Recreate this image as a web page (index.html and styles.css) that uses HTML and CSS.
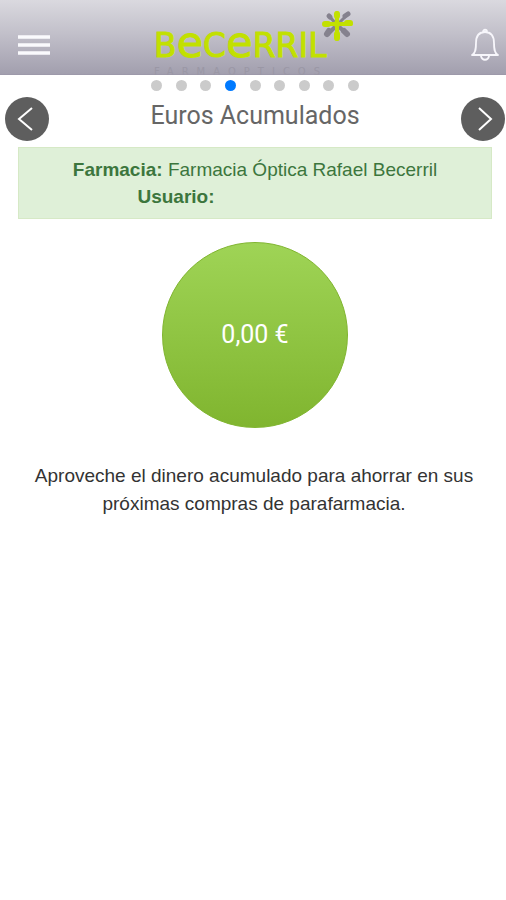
FILE: index.html
```html
<!DOCTYPE html>
<html lang="es">
<head>
<meta charset="utf-8">
<meta name="viewport" content="width=device-width, initial-scale=1">
<title>Euros Acumulados</title>
<link rel="stylesheet" href="styles.css">
</head>
<body>
<header class="topbar">
  <button class="icon-button" type="button" aria-label="Menú">
    <svg width="34" height="22" viewBox="0 0 34 22"><path d="M1 3h32M1 11h32M1 19h32" stroke="#fafafd" stroke-width="3.6"/></svg>
  </button>
  <div class="brand">
    <div class="wordmark">B<span class="round">e</span>C<span class="round">e</span>RRIL</div>
    <div class="tagline">FARMAOPTICOS</div>
    <svg class="flower" width="32" height="32" viewBox="0 0 32 32">
      <g stroke="#85828e" stroke-linecap="round">
        <path d="M15 15L8 7M15 15l8-8" stroke-width="3"/>
        <path d="M8 7l-1-1M23 6l3-2" stroke-width="5"/>
        <path d="M15 15l-9 9M15 15l10 9" stroke-width="4"/>
        <path d="M7 21l-2 3M22 21l3 3" stroke-width="6"/>
      </g>
      <g stroke="#c2e000" stroke-linecap="round">
        <path d="M15 3v26M3 14h26" stroke-width="4"/>
        <path d="M15 4v2M15 24v4M3 14h3M25 13h3" stroke-width="6"/>
        <circle cx="15" cy="14" r="3" fill="#c2e000"/>
      </g>
    </svg>
  </div>
  <button class="icon-button" type="button" aria-label="Notificaciones">
    <svg width="28" height="34" viewBox="0 0 28 34" fill="none" stroke="#f7f6fb" stroke-width="1.8" stroke-linecap="round" stroke-linejoin="round"><path d="M12 4c0-3 4-3 4 0M1 27c4-2 4-7 4-12 0-7 3-11 9-11s9 4 9 11c0 5 0 10 4 12ZM10 28c1 5 7 5 8 0"/></svg>
  </button>
</header>
<main class="page">
  <nav class="pager" aria-label="Páginas">
    <span class="dot"></span><span class="dot"></span><span class="dot"></span><span class="dot active"></span><span class="dot"></span><span class="dot"></span><span class="dot"></span><span class="dot"></span><span class="dot"></span>
  </nav>
  <div class="title-row">
    <button class="arrow" type="button" aria-label="Anterior"><svg width="44" height="44" viewBox="0 0 44 44"><path d="M27 11L14 22l13 11"/></svg></button>
    <h1 class="title">Euros Acumulados</h1>
    <button class="arrow" type="button" aria-label="Siguiente"><svg width="44" height="44" viewBox="0 0 44 44"><path d="M18 11l12 11-12 11"/></svg></button>
  </div>
  <section class="info">
    <div><strong>Farmacia:</strong> Farmacia Óptica Rafael Becerril</div>
    <div><strong>Usuario:</strong><span class="user-name"></span></div>
  </section>
  <div class="amount">0,00 €</div>
  <p class="note">Aproveche el dinero acumulado para ahorrar en sus próximas compras de parafarmacia.</p>
</main>
</body>
</html>
```
FILE: styles.css
```css
* { box-sizing: border-box; }
body {
  margin: 0;
  background: #fff;
  color: #333;
  font: 19px/28px "Liberation Sans", Arial, sans-serif;
}
button {
  padding: 0;
  border: 0;
  background: none;
}
svg { display: block; }
.topbar {
  display: flex;
  justify-content: space-between;
  height: 75px;
  padding: 0 7px 0 17px;
  background: linear-gradient(#dad9df, #c2c0ca 45%, #a29fae);
  border-bottom: 1px solid #9d99aa;
}
.icon-button { padding-top: 16px; }
.brand {
  position: relative;
  width: 200px;
  margin-right: 14px;
  padding-top: 25px;
}
.wordmark {
  color: #c2e000;
  font: 33px/34px "DejaVu Sans", sans-serif;
  -webkit-text-stroke: 1px #c2e000;
  white-space: nowrap;
}
.round {
  font-size: 43px;
  line-height: 34px;
}
.tagline {
  margin-top: 3px;
  color: #9a97a5;
  font: 10px/12px "DejaVu Sans", sans-serif;
  letter-spacing: 8px;
  white-space: nowrap;
}
.flower {
  position: absolute;
  top: 10px;
  right: 0;
}
.page { text-align: center; }
.pager {
  display: flex;
  justify-content: space-between;
  width: 212px;
  margin: 5px auto 0;
  padding-left: 4px;
}
.dot {
  width: 11px;
  height: 11px;
  border-radius: 50%;
  background: #cbcbcb;
}
.dot.active { background: #007aff; }
.title-row {
  display: flex;
  justify-content: space-between;
  padding: 6px 1px 0 5px;
}
.arrow {
  width: 44px;
  height: 44px;
  border-radius: 50%;
  background: #5e5e5e;
}
.arrow path {
  fill: none;
  stroke: #fff;
  stroke-width: 2;
}
.title {
  margin: 0;
  color: #666;
  font: 25px/38px Roboto, sans-serif;
}
.info {
  margin: 6px 14px 23px 18px;
  padding: 8px 0;
  border: 1px solid #d6e9c6;
  background: #dff0d8;
  color: #3c763d;
  line-height: 27px;
}
.user-name {
  display: inline-block;
  width: 158px;
}
.amount {
  display: inline-grid;
  place-items: center;
  width: 186px;
  height: 186px;
  margin-left: 4px;
  border: 1px solid #80b52f;
  border-radius: 50%;
  background: linear-gradient(#9fd456, #80b52f);
  color: #fff;
  font: 25px/32px Roboto, sans-serif;
  vertical-align: top;
}
.note {
  margin: 34px 18px 0 20px;
}
```
